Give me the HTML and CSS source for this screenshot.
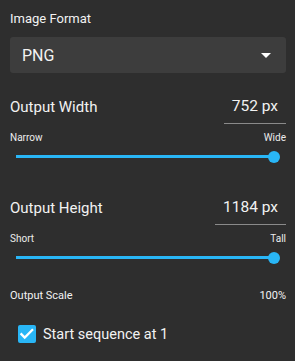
FILE: index.html
```html
<!DOCTYPE html>
<html lang="en">
<head>
  <meta charset="UTF-8">
  <meta name="viewport" content="width=device-width, initial-scale=1.0">
  <title>Export Settings</title>
  <link rel="stylesheet" href="styles.css">
</head>
<body>
  <div class="panel">
    <div class="field-label">Image Format</div>
    <div class="select">
      <span class="select-value">PNG</span>
      <span class="select-arrow"></span>
    </div>

    <div class="size-row">
      <span class="size-label">Output Width</span>
      <span class="size-input">752 px</span>
    </div>
    <div class="range-ends">
      <span>Narrow</span>
      <span>Wide</span>
    </div>
    <div class="slider"><div class="slider-fill"></div><div class="slider-thumb"></div></div>

    <div class="size-row tall">
      <span class="size-label">Output Height</span>
      <span class="size-input">1184 px</span>
    </div>
    <div class="range-ends">
      <span>Short</span>
      <span>Tall</span>
    </div>
    <div class="slider"><div class="slider-fill"></div><div class="slider-thumb"></div></div>

    <div class="scale-row">
      <span>Output Scale</span>
      <span>100%</span>
    </div>

    <label class="check-row">
      <span class="check-box">
        <svg width="18" height="18" viewBox="0 0 18 18"><path d="M2.6 8.4 L6.7 12.5 L15 4.2" fill="none" stroke="#fff" stroke-width="2.3"/></svg>
      </span>
      <span class="check-text">Start sequence at 1</span>
    </label>
  </div>
</body>
</html>
```

FILE: styles.css
```css
body {
  margin: 0;
  background: #2e2e2e;
  color: #f2f2f2;
  font-family: Roboto, 'Noto Sans', sans-serif;
}
.panel {
  padding: 10px 9px 0 10px;
}
.field-label {
  font-size: 13px;
  line-height: 18px;
}
.select {
  margin-top: 9px;
  height: 36px;
  background: #3d3d3d;
  border-radius: 3px;
  display: flex;
  align-items: center;
  justify-content: space-between;
  padding: 0 15px 0 12px;
}
.select-value {
  font-size: 16px;
}
.select-arrow {
  width: 0;
  height: 0;
  border-left: 5px solid transparent;
  border-right: 5px solid transparent;
  border-top: 5px solid #fff;
}
.size-row {
  margin-top: 23px;
  display: flex;
  justify-content: space-between;
  align-items: flex-end;
}
.size-row.tall {
  margin-top: 39px;
}
.size-label {
  font-size: 15px;
  line-height: 20px;
  padding-bottom: 7px;
}
.size-input {
  font-size: 15.5px;
  line-height: 20px;
  padding: 0 8px 7px 8px;
  border-bottom: 1px solid #8a8a8a;
}
.range-ends {
  margin-top: 7px;
  display: flex;
  justify-content: space-between;
  font-size: 10px;
  line-height: 14px;
  color: #ececec;
}
.slider {
  position: relative;
  height: 3px;
  margin: 10px 12.5px 0 6px;
}
.slider-fill {
  height: 3px;
  background: #29b6f6;
}
.slider-thumb {
  position: absolute;
  right: -6px;
  top: -4.5px;
  width: 12px;
  height: 12px;
  border-radius: 50%;
  background: #29b6f6;
}
.scale-row {
  margin-top: 29px;
  display: flex;
  justify-content: space-between;
  font-size: 11px;
  line-height: 16px;
}
.check-row {
  margin: 21px 0 0 8px;
  display: flex;
  align-items: flex-start;
  gap: 7px;
}
.check-box {
  width: 18px;
  height: 18px;
  border-radius: 2px;
  background: #29b6f6;
}
.check-box svg {
  display: block;
}
.check-text {
  font-size: 14.5px;
  line-height: 20px;
}
```
